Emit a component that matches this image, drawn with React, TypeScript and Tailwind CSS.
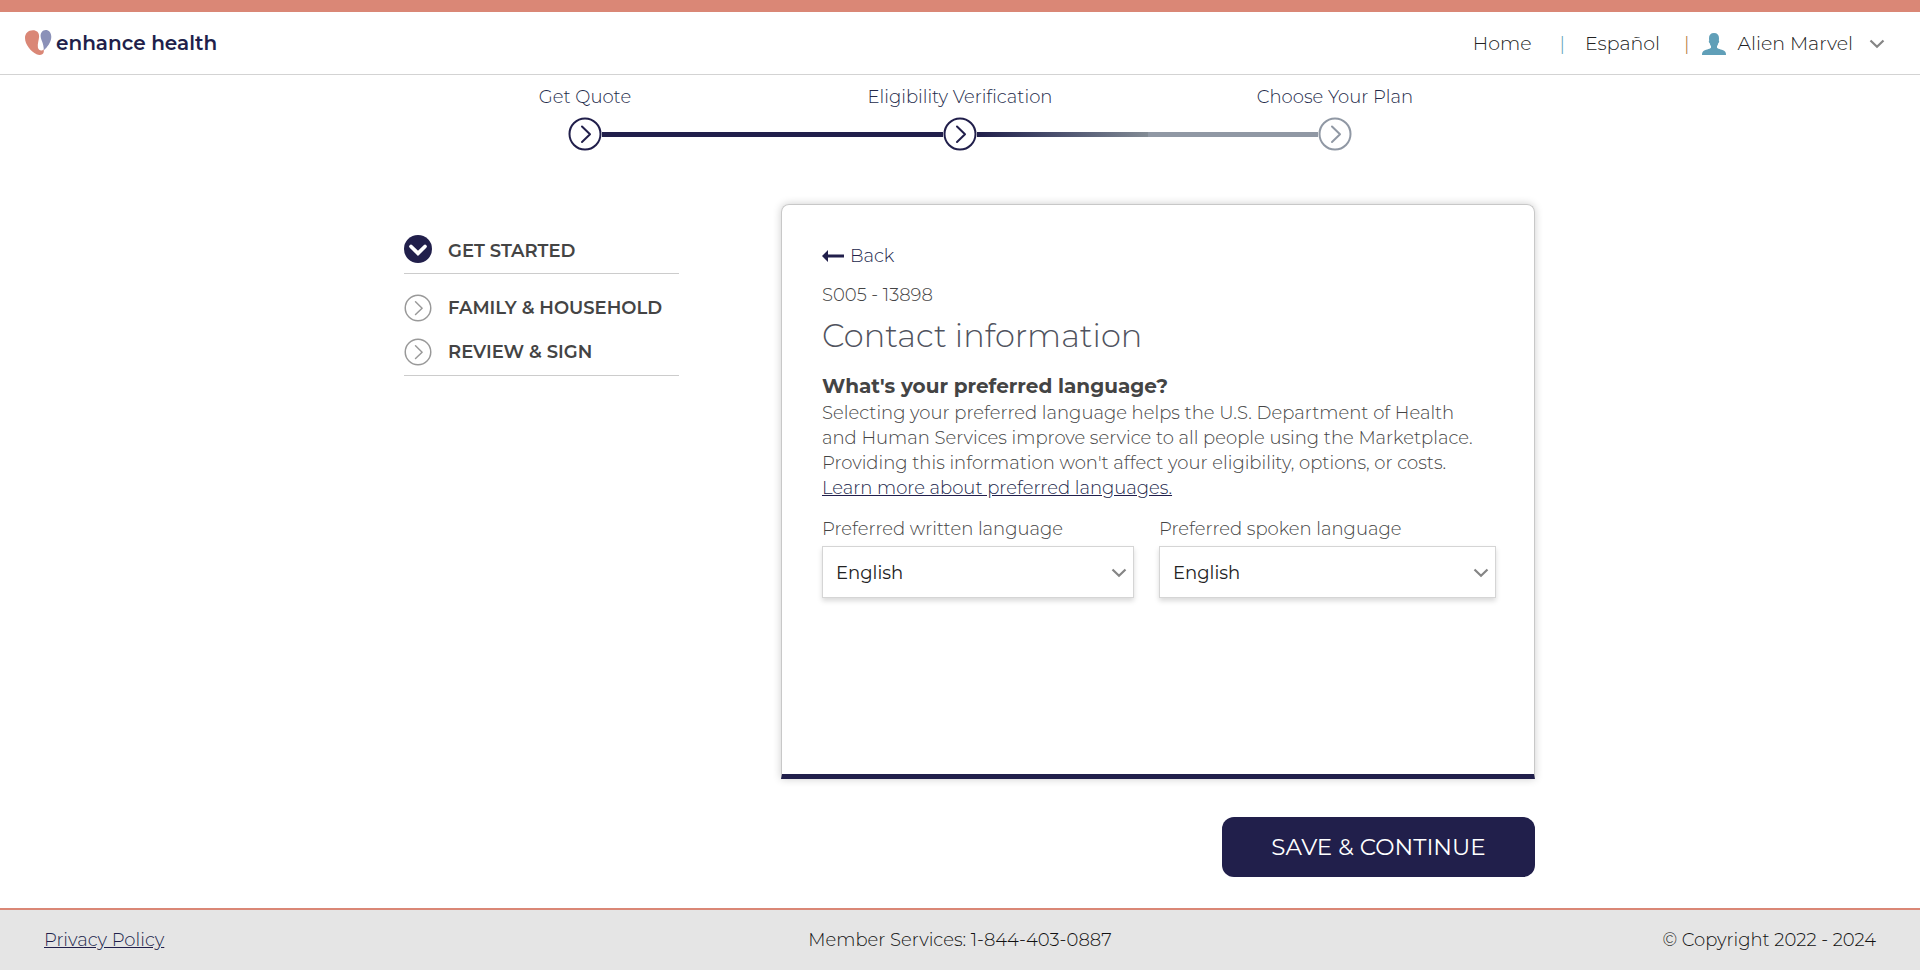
import React from "react";

type StepProps = { label: string; left: string; right: string; tone: string };

function CircleChevron({ className, strokeWidth }: { className: string; strokeWidth: number }) {
  return (
    <svg viewBox="0 0 34 34" fill="none" stroke="currentColor" strokeWidth={strokeWidth} className={className} aria-hidden="true">
      <circle cx="17" cy="17" r="15.5" />
      <path d="M14 9.5 22 17.3 14 25" strokeLinecap="round" strokeLinejoin="round" />
    </svg>
  );
}

function DownChevron({ className }: { className: string }) {
  return (
    <svg viewBox="0 0 16 10" fill="none" stroke="#858585" strokeWidth="2.2" className={className} aria-hidden="true">
      <path d="M1.5 1.5 8 7.8 14.5 1.5" />
    </svg>
  );
}

function Step({ label, left, right, tone }: StepProps) {
  return (
    <li className="flex flex-1 flex-col items-center">
      <span className="text-lg leading-6 text-[#232a4a]">{label}</span>
      <div className="mt-2 flex w-full items-center">
        <span className={`h-[5px] flex-1 ${left}`} />
        <CircleChevron className={`size-[34px] shrink-0 ${tone}`} strokeWidth={2} />
        <span className={`h-[5px] flex-1 ${right}`} />
      </div>
    </li>
  );
}

function SelectField({ id, label }: { id: string; label: string }) {
  return (
    <div className="flex flex-col">
      <label htmlFor={id} className="text-lg leading-6">{label}</label>
      <div className="relative mt-[5px]">
        <select
          id={id}
          defaultValue="English"
          className="h-[52px] w-full appearance-none border border-[#d5d5d5] bg-white px-[13px] pt-[2px] text-lg font-normal text-[#222] shadow-[0_3px_5px_rgba(0,0,0,0.15)]"
        >
          <option>English</option>
          <option>Spanish</option>
        </select>
        <DownChevron className="pointer-events-none absolute top-[22px] right-[7px] h-[10px] w-4" />
      </div>
    </div>
  );
}

function Logo() {
  return (
    <a href="#" aria-label="enhance health" className="flex items-center gap-1">
      <svg viewBox="0 0 27 26" className="h-[26px] w-[27px]" aria-hidden="true">
        <path d="M8 .3C3 .3 0 3.600 0 8c0 6.500 6 13.500 11.500 16.300 3.200 1.600 6.500.7 7.200-2 .3-1.200.1-2.300-.2-3.100-1 2-5 1.800-5.600-1.700-.6-3.500 1-7.300 1.200-11C14.200 2.500 11.600.3 8 .3Z" fill="#da8776" />
        <path d="M20.700 0c-3.200 0-5.200 3-5.100 6 .1 4 3.400 7.500 3.200 14.300 3.500-3 7.500-8.300 7.500-13.600C26.300 2.500 23.800 0 20.700 0Z" fill="#8b91b8" />
      </svg>
      <span className="text-xl leading-7 font-semibold text-[#211f4b]">enhance health</span>
    </a>
  );
}

export default function App() {
  return (
    <div className="flex min-h-screen flex-col bg-white font-['Montserrat','Inter',sans-serif] font-light text-[#444]">
      <header className="flex h-[75px] items-center justify-between border-t-12 border-b border-t-[#da8776] border-b-[#d3d3d3] pr-[35px] pl-[25px]">
        <Logo />
        <nav className="flex items-center pt-[2px] text-[19px] text-[#222]">
          <a href="#" className="mr-7">Home</a>
          <span className="mr-5 text-[#609fb8]">|</span>
          <a href="#" className="mr-6">Español</a>
          <span className="mr-3 text-[#b0762f]">|</span>
          <button type="button" className="flex items-center">
            <svg viewBox="0 0 24 22" className="mr-3 h-[22px] w-6" fill="#609fb8" aria-hidden="true">
              <path d="M12 0c3.300 0 5 2 5 5.200 0 1-.1 1.600-.2 2.200.8.5.2 2.300-.5 2.700-.3 1.500-.8 2.500-1.300 3.200v1.400c1.300 1.500 6 1.800 8 3.800.8.8 1 2 1 3.500H0c0-1.500.2-2.700 1-3.500 2-2 6.700-2.300 8-3.800v-1.400c-.5-.7-1-1.700-1.300-3.200-.7-.4-1.300-2.200-.5-2.700C7.100 6.800 7 6.200 7 5.200 7 2 8.700 0 12 0Z" />
            </svg>
            <span className="mr-4">Alien Marvel</span>
            <DownChevron className="h-[10px] w-4" />
          </button>
        </nav>
      </header>

      <main className="flex-1">
        <ol className="mx-auto flex max-w-[1125px] pt-[10px]">
          <Step label="Get Quote" left="bg-transparent" right="bg-[#211f4b]" tone="text-[#211f4b]" />
          <Step label="Eligibility Verification" left="bg-[#211f4b]" right="bg-linear-to-r from-[#211f4b] to-[#828b94]" tone="text-[#211f4b]" />
          <Step label="Choose Your Plan" left="bg-[#9098a4]" right="bg-transparent" tone="text-[#9098a4]" />
        </ol>

        <div className="mx-auto flex max-w-[1150px] justify-between gap-12 pt-[53px] pl-[19px]">
          <aside className="w-[275px] shrink-0 pt-[31px] text-lg leading-6 font-semibold whitespace-nowrap">
            <div className="border-b border-[#ccc] pb-[10px]">
              <a href="#" className="flex items-end gap-4">
                <svg viewBox="0 0 28 28" className="size-7" aria-hidden="true">
                  <circle cx="14" cy="14" r="14" fill="#211f4b" />
                  <path d="m7 11.500 7 6.800 7-6.800" fill="none" stroke="#fff" strokeWidth="3.800" strokeLinecap="round" />
                </svg>
                GET STARTED
              </a>
            </div>
            <div className="flex flex-col gap-4 border-b border-[#ccc] pt-5 pb-[9px]">
              <a href="#" className="flex items-center gap-4">
                <CircleChevron className="size-7 text-[#999]" strokeWidth={1.8} />
                FAMILY &amp; HOUSEHOLD
              </a>
              <a href="#" className="flex items-center gap-4">
                <CircleChevron className="size-7 text-[#999]" strokeWidth={1.8} />
                REVIEW &amp; SIGN
              </a>
            </div>
          </aside>

          <div className="flex w-[754px] flex-col items-end">
            <section className="min-h-[575px] w-full rounded-t-lg border border-b-5 border-[#c8c8c8] border-b-[#211f4b] pt-[39px] pr-[38px] pl-10 shadow-[0_0_8px_rgba(0,0,0,0.2)]">
              <button type="button" className="flex items-center gap-[6px] text-lg leading-6 text-[#211f4b]">
                <svg viewBox="0 0 22 12" className="h-3 w-[22px]" fill="#211f4b" aria-hidden="true">
                  <path d="M0 6 6 0v4.500h16v3H6V12Z" />
                </svg>
                Back
              </button>
              <p className="mt-[15px] text-lg leading-6">S005 - 13898</p>
              <h1 className="mt-[9px] text-[32px] leading-10 text-[#50535e]">Contact information</h1>
              <h2 className="mt-4 text-xl leading-7 font-bold">What&apos;s your preferred language?</h2>
              <p className="mt-px text-lg leading-[25px] whitespace-nowrap">
                Selecting your preferred language helps the U.S. Department of Health<br />
                and Human Services improve service to all people using the Marketplace.<br />
                Providing this information won&apos;t affect your eligibility, options, or costs.<br />
                <a href="#" className="text-[#211f4b] underline">Learn more about preferred languages.</a>
              </p>
              <div className="mt-4 grid grid-cols-[312fr_337fr] gap-x-[25px]">
                <SelectField id="written" label="Preferred written language" />
                <SelectField id="spoken" label="Preferred spoken language" />
              </div>
            </section>
            <button type="button" className="mt-[38px] mb-[31px] h-[60px] w-[313px] rounded-xl bg-[#211f4b] text-[23px] font-normal text-white">
              SAVE &amp; CONTINUE
            </button>
          </div>
        </div>
      </main>

      <footer className="grid h-[62px] grid-cols-3 items-center border-t-2 border-[#da8776] bg-[#e5e5e5] px-11 text-lg text-[#111]">
        <a href="#" className="justify-self-start text-[#211f4b] underline">Privacy Policy</a>
        <span className="justify-self-center">Member Services: 1-844-403-0887</span>
        <span className="justify-self-end">© Copyright 2022 - 2024</span>
      </footer>
    </div>
  );
}
